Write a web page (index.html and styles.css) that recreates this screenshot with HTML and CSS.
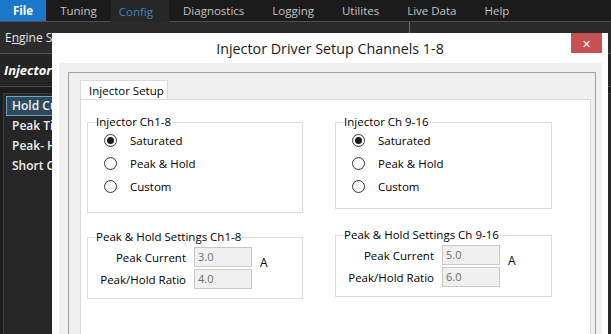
FILE: index.html
```html
<!DOCTYPE html>
<html lang="en">
	<head>
		<meta charset="utf-8" />
		<title>Injector Driver Setup</title>
		<link rel="stylesheet" href="styles.css">
	</head>
	<body>
		<div id="app">
			<div class="menubar">
				<span class="menuItem menuFile">File</span>
				<span class="menuItem">Tuning</span>
				<span class="menuItem menuActive">Config</span>
				<span class="menuItem">Diagnostics</span>
				<span class="menuItem">Logging</span>
				<span class="menuItem">Utilites</span>
				<span class="menuItem">Live Data</span>
				<span class="menuItem">Help</span>
			</div>
			<div class="toolbar">
				<span class="toolbarText">E<u>n</u>gine Settings</span>
				<span class="toolbarDivider"></span>
			</div>
			<div class="sectionHeader">Injector</div>
			<div class="sideList">
				<div class="sideItem sideItemActive">Hold Current</div>
				<div class="sideItem">Peak Time</div>
				<div class="sideItem">Peak- Hold</div>
				<div class="sideItem">Short Circuit</div>
			</div>
		</div>

		<div class="dialog">
			<div class="titleBar">
				<span class="titleText">Injector Driver Setup Channels 1-8</span>
				<span class="closeButton">&#x2715;</span>
			</div>
			<div class="client">
				<div class="panel">
					<div class="tabStrip">
						<span class="tab">Injector Setup</span>
					</div>
					<div class="tabPage">
						<fieldset class="group groupRadio">
							<legend>Injector Ch1-8</legend>
							<div class="radioRow"><span class="radio checked"></span>Saturated</div>
							<div class="radioRow"><span class="radio"></span>Peak &amp; Hold</div>
							<div class="radioRow"><span class="radio"></span>Custom</div>
						</fieldset>
						<fieldset class="group groupRadio groupRadioRight">
							<legend>Injector Ch 9-16</legend>
							<div class="radioRow"><span class="radio checked"></span>Saturated</div>
							<div class="radioRow"><span class="radio"></span>Peak &amp; Hold</div>
							<div class="radioRow"><span class="radio"></span>Custom</div>
						</fieldset>
						<fieldset class="group groupSettings">
							<legend>Peak &amp; Hold Settings Ch1-8</legend>
							<div class="settingsGrid">
								<label>Peak Current</label>
								<span class="field">3.0</span>
								<span class="unit">A</span>
								<label>Peak/Hold Ratio</label>
								<span class="field">4.0</span>
							</div>
						</fieldset>
						<fieldset class="group groupSettings groupSettingsRight">
							<legend>Peak &amp; Hold Settings Ch 9-16</legend>
							<div class="settingsGrid">
								<label>Peak Current</label>
								<span class="field">5.0</span>
								<span class="unit">A</span>
								<label>Peak/Hold Ratio</label>
								<span class="field">6.0</span>
							</div>
						</fieldset>
					</div>
				</div>
			</div>
		</div>
	</body>
</html>
```

FILE: styles.css
```css
html, body {
	margin: 0px;
	width: 611px;
	height: 334px;
	overflow: hidden;
	background: #1d1d1d;
	font-family: "Open Sans", "Noto Sans", sans-serif;
	font-size: 11px;
}
#app {
	display: flex;
	flex-direction: column;
	height: 334px;
}
.menubar {
	display: flex;
	height: 21px;
	background: #1b1b1b;
	border-bottom: 1px solid #4d4d4d;
}
.menuItem {
	display: flex;
	align-items: center;
	padding: 0px 14px;
	color: #c4c4c4;
	font-size: 11.5px;
}
.menuFile {
	padding: 0px 13px 0px 13px;
	background: #1a77c9;
	color: #ffffff;
	font-weight: bold;
}
.menuActive {
	padding: 0px 16px 0px 8px;
	background: #272727;
	color: #3b86c6;
	margin-bottom: -1px;
}
.toolbar {
	display: flex;
	height: 31px;
	background: #2b2b2b;
	border-bottom: 1px solid #555555;
}
.toolbarText {
	display: flex;
	align-items: center;
	width: 404px;
	padding-left: 5px;
	color: #e4e4e4;
	font-size: 12px;
	white-space: nowrap;
}
.toolbarDivider {
	border-left: 1px solid #6a6a6a;
}
.sectionHeader {
	display: flex;
	align-items: center;
	height: 32px;
	padding-left: 4px;
	background: #242424;
	color: #ffffff;
	font-weight: bold;
	font-style: italic;
	font-size: 13px;
	border-bottom: 1px solid #4a4a4a;
}
.sideList {
	flex: 1;
	margin: 6px 0px 0px 3px;
	padding: 2px 0px 0px 2px;
	background: #262626;
	border-left: 1px solid #3c3c3c;
	border-top: 1px solid #3c3c3c;
}
.sideItem {
	height: 20px;
	line-height: 20px;
	padding-left: 6px;
	color: #f0f0f0;
	font-weight: 600;
	font-size: 12px;
	white-space: nowrap;
}
.sideItemActive {
	height: 18px;
	line-height: 18px;
	width: 60px;
	padding-left: 5px;
	background: #2c4c5d;
	border: 1px solid #6ca6c6;
}

.dialog {
	position: absolute;
	left: 52px;
	top: 33px;
	width: 556px;
	height: 301px;
	background: #ffffff;
	display: flex;
	flex-direction: column;
}
.titleBar {
	display: flex;
	justify-content: center;
	align-items: center;
	height: 30px;
	position: relative;
}
.titleText {
	font-size: 14.3px;
	color: #1a1a1a;
	margin-top: 1px;
}
.closeButton {
	position: absolute;
	right: 6px;
	top: 0px;
	width: 31px;
	height: 20px;
	background: #c75050;
	color: #ffffff;
	font-size: 11px;
	display: flex;
	justify-content: center;
	align-items: center;
}
.client {
	flex: 1;
	margin: 0px 6px 0px 7px;
	padding: 9px 6px 0px 9px;
	background: #f0f0f0;
	display: flex;
}
.panel {
	flex: 1;
	border: 1px solid #a0a0a0;
	border-bottom: none;
	padding: 7px 4px 0px 11px;
	display: flex;
	flex-direction: column;
}
.tabStrip {
	display: flex;
	height: 19px;
}
.tab {
	display: flex;
	align-items: center;
	padding: 0px 3px 0px 8px;
	background: #ffffff;
	border: 1px solid #d9d9d9;
	border-bottom: none;
	color: #000000;
	font-size: 11.5px;
	white-space: nowrap;
}
.tabPage {
	flex: 1;
	background: #ffffff;
	border: 1px solid #d9d9d9;
	border-bottom: none;
	padding: 15px 0px 0px 6px;
	display: grid;
	grid-template-columns: 216px 217px;
	grid-template-rows: 98px 69px;
	column-gap: 32px;
	row-gap: 17px;
	align-content: start;
}
.group {
	margin: 0px;
	padding: 0px;
	border: 1px solid #dcdcdc;
	min-width: 0px;
	box-sizing: border-box;
	color: #000000;
}
.group legend {
	margin-left: 7px;
	padding: 0px 1px;
	line-height: 14px;
	font-size: 11.5px;
}
.groupRadio {
	height: 98px;
}
.groupRadioRight {
	height: 94px;
}
.radioRow {
	display: flex;
	align-items: center;
	height: 23px;
	padding-left: 16px;
	font-size: 11.5px;
}
.radio {
	width: 11px;
	height: 11px;
	border: 1px solid #333333;
	border-radius: 50%;
	background: #ffffff;
	margin-right: 13px;
	display: flex;
	justify-content: center;
	align-items: center;
}
.radio.checked::after {
	content: "";
	width: 7px;
	height: 7px;
	border-radius: 50%;
	background: #1a1a1a;
}
.groupSettings {
	height: 69px;
}
.groupSettingsRight {
	margin-top: -2px;
}
.settingsGrid {
	display: grid;
	grid-template-columns: 98px 58px auto;
	grid-template-rows: 20px 20px;
	column-gap: 8px;
	row-gap: 2px;
	padding-top: 3px;
	align-items: center;
}
.settingsGrid label {
	text-align: right;
	white-space: nowrap;
	font-size: 11.5px;
}
.field {
	box-sizing: border-box;
	height: 20px;
	padding: 1px 3px;
	background: #f0f0f0;
	border: 1px solid #c8c8c8;
	color: #6d6d6d;
	font-size: 11px;
}
.unit {
	align-self: start;
	margin-top: 7px;
	font-size: 12px;
}
```
